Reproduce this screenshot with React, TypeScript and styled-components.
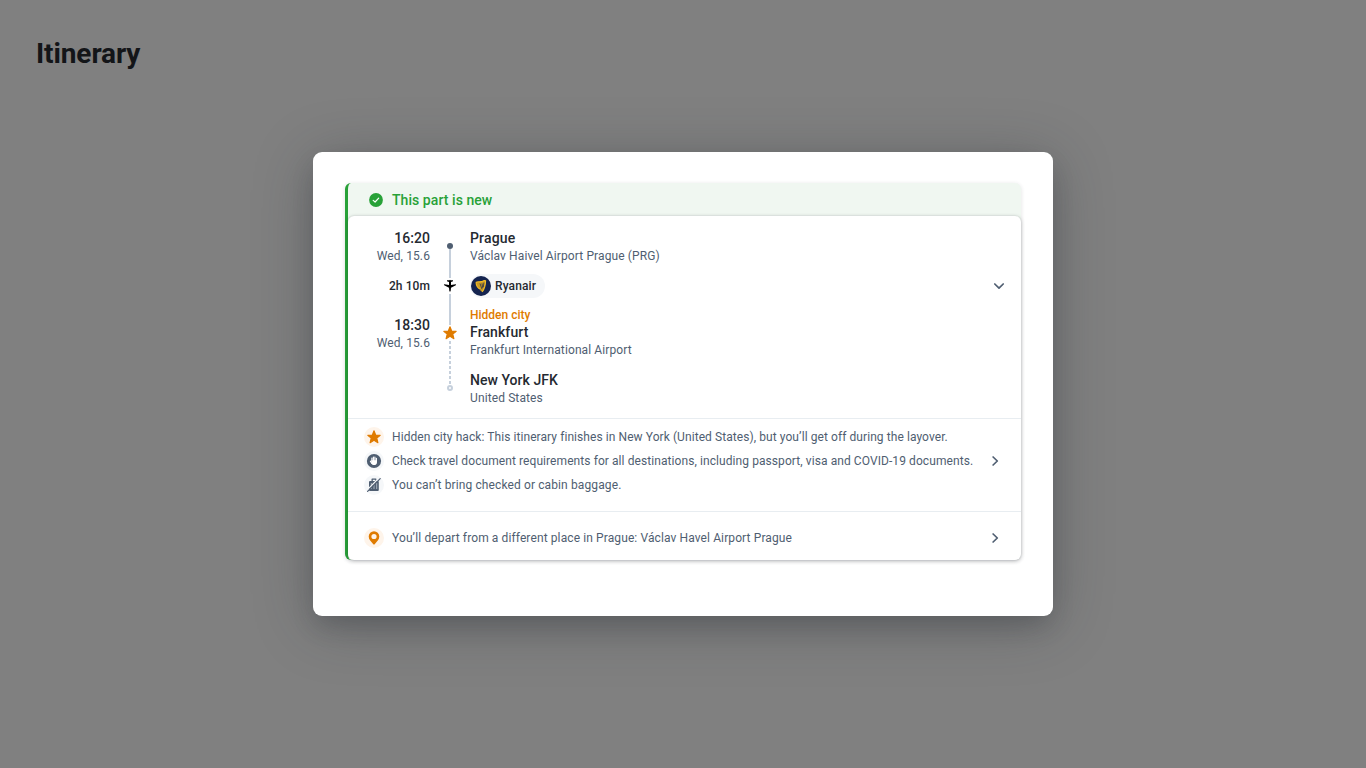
import React from "react";
import styled, { createGlobalStyle } from "styled-components";

const ink = "#252a31";
const cloud = "#4f5e71";
const orange = "#df7b00";
const green = "#28a138";
const line = "#c6d0dc";

const GlobalStyle = createGlobalStyle`
  * { box-sizing: border-box; }
  body { margin: 0; background: #808080; font-family: Roboto, "Liberation Sans", sans-serif; color: ${ink}; }
`;

const Page = styled.div`
  height: 768px;
  overflow: hidden;
  padding: 36px 36px 0;
`;
const Title = styled.h1`
  margin: 0;
  font-size: 28px;
  line-height: 36px;
  height: 36px;
  font-weight: 700;
  letter-spacing: -0.1px;
  color: #131518;
`;
const Modal = styled.section`
  width: 740px;
  height: 464px;
  margin: 80px auto 0;
  padding: 31px 32px;
  background: #fff;
  border-radius: 9px;
  box-shadow: 0 12px 24px -4px rgba(37, 42, 49, 0.24), 0 8px 60px 0 rgba(37, 42, 49, 0.32);
`;
const Part = styled.article`
  width: 676px;
  height: 377px;
  border-left: 3px solid ${green};
  border-radius: 6px;
  background: #f0f7f1;
  box-shadow: 0 1px 4px 0 rgba(37, 42, 49, 0.14);
`;
const PartHeader = styled.header`
  display: flex;
  align-items: center;
  height: 33px;
  padding: 1px 0 0 20px;
  gap: 8px;
  color: ${green};
  font-size: 14px;
  font-weight: 500;
  letter-spacing: 0.06px;
`;
const Body = styled.div`
  height: 344px;
  background: #fff;
  border-radius: 6px;
  box-shadow: 0 0 2px 0 rgba(37, 42, 49, 0.16), 0 1px 4px 0 rgba(37, 42, 49, 0.24);
`;
const Route = styled.div`
  display: grid;
  grid-template-columns: 82px 40px 1fr 45px;
  height: 202px;
  padding-top: 12px;
`;
const Times = styled.div`
  text-align: right;
`;
const Stops = styled.div``;
const Stop = styled.div<{ $gap?: number }>`
  margin-top: ${(p) => p.$gap ?? 0}px;
`;
const Primary = styled.div<{ $track?: number }>`
  font-size: 14px;
  line-height: 20px;
  font-weight: 500;
  letter-spacing: ${(p) => p.$track ?? 0}px;
`;
const Secondary = styled.div`
  font-size: 12px;
  line-height: 16px;
  letter-spacing: 0.11px;
  color: ${cloud};
`;
const Duration = styled.div`
  margin-top: 14px;
  font-size: 12px;
  line-height: 16px;
  font-weight: 500;
  letter-spacing: 0.08px;
`;
const Hidden = styled.div`
  height: 15px;
  font-size: 12px;
  line-height: 16px;
  font-weight: 500;
  color: ${orange};
`;
const Rail = styled.div`
  display: flex;
  flex-direction: column;
  align-items: center;
  padding-top: 15px;
  svg { display: block; flex: none; }
`;
const Dot = styled.span`
  width: 6px;
  height: 6px;
  border-radius: 50%;
  background: ${cloud};
`;
const Track = styled.span<{ $h: number }>`
  width: 2px;
  height: ${(p) => p.$h}px;
  background: ${line};
`;
const Dashes = styled.span`
  width: 2px;
  height: 44px;
  background: repeating-linear-gradient(to bottom, ${line} 0 3px, transparent 3px 5px);
`;
const Ring = styled.span`
  width: 6px;
  height: 6px;
  border: 2px solid ${line};
  border-radius: 50%;
`;
const Carrier = styled.div`
  display: inline-flex;
  align-items: center;
  gap: 4px;
  height: 24px;
  margin-top: 10px;
  padding: 0 9px 0 1px;
  border-radius: 12px;
  background: #f5f7f9;
  font-size: 12px;
  font-weight: 500;
  letter-spacing: 0.12px;
  vertical-align: top;
`;
const Toggle = styled.div`
  padding: 50px 0 0 15px;
`;
const Notes = styled.div<{ $h: number; $top: number }>`
  height: ${(p) => p.$h}px;
  padding: ${(p) => p.$top}px 18px 0 16px;
  border-top: 1px solid #e8edf1;
`;
const Note = styled.div`
  display: flex;
  align-items: center;
  height: 24px;
  font-size: 12px;
  color: ${cloud};
  svg { flex: none; }
`;
const Badge = styled.span<{ $warm?: boolean }>`
  display: flex;
  align-items: center;
  justify-content: center;
  width: 20px;
  height: 20px;
  margin-right: 8px;
  border-radius: 50%;
  background: ${(p) => (p.$warm ? "#fef4ea" : "#f5f7f9")};
`;
const NoteText = styled.span<{ $track: number }>`
  flex: 1;
  white-space: nowrap;
  letter-spacing: ${(p) => p.$track}px;
`;

const Check = () => (
  <svg width="16" height="16" viewBox="0 0 16 16">
    <circle cx="8" cy="8" r="6.9" fill={green} />
    <path d="M5.2 8.4 7.1 10 10.7 6.2" fill="none" stroke="#fff" strokeWidth="1.2" strokeLinecap="round" strokeLinejoin="round" />
  </svg>
);
const Star = () => (
  <svg width="16" height="16" viewBox="0 0 16 16">
    <path d="M8 1.8 9.7 6 14.2 6.3 10.8 9.2 11.9 13.7 8 11.3 4.1 13.7 5.2 9.2 1.8 6.3 6.3 6Z" fill={orange} stroke={orange} strokeWidth="1.1" strokeLinejoin="round" />
  </svg>
);
const Plane = () => (
  <svg width="16" height="16" viewBox="0 0 16 16">
    <path d="M5 2.2h2.5L8 1.800l.5.4H11v1L9 4.100V7.100L13.600 6.200Q14.500 6.300 13.800 7.300L9 9.800 8.700 12.800Q8 14.500 7.300 12.800L7 9.800 2.200 7.300Q1.500 6.300 2.400 6.200L7 7.100V4.100L5 3.200Z" fill="#000" />
  </svg>
);
const Hand = () => (
  <svg width="16" height="16" viewBox="0 0 16 16">
    <circle cx="8" cy="8" r="7.1" fill={cloud} />
    <path d="M5.300 7.300h5.700v1.900c0 1.800-1.100 2.900-2.900 2.900-1.400 0-2.200-.6-2.800-1.900Z" fill="#fff" />
    <path d="M5.900 8V5.100M7.400 8V4.100M8.900 8V4.100M10.400 8V5.300M5.700 10.300 4.400 8.200" fill="none" stroke="#fff" strokeWidth="1.15" strokeLinecap="round" />
  </svg>
);
const NoBag = () => (
  <svg width="16" height="16" viewBox="0 0 16 16">
    <path d="M5.500 4V2.100q0-.7.7-.7h3.600q.7 0 .7.7V4h1.300q1 0 1 1v8q0 1-1 1H4q-1 0-1-1V5q0-1 1-1Zm1.300 0h2.400V2.700H6.800Z" fill={cloud} />
    <path d="M5.300 6v6M8 6v6M10.700 6v6" stroke="#c1c9d2" strokeWidth=".8" />
    <path d="M1 13.100 13.300.8" stroke="#f5f7f9" strokeWidth="1.300" />
    <path d="M1.600 14.300 14.200 1.700" stroke={cloud} strokeWidth="1.200" strokeLinecap="round" />
  </svg>
);
const Pin = () => (
  <svg width="16" height="16" viewBox="0 0 16 16">
    <path fillRule="evenodd" d="M8 1.2a5.300 5.300 0 0 1 5.300 5.300C13.300 9.600 10.900 11.500 8.700 14.200Q8 14.900 7.300 14.200C5.100 11.500 2.700 9.600 2.700 6.500A5.300 5.300 0 0 1 8 1.200Zm0 2.700a2.600 2.600 0 1 0 0 5.200 2.600 2.600 0 0 0 0-5.200Z" fill={orange} />
  </svg>
);
const Chevron = ({ down }: { down?: boolean }) => (
  <svg width="16" height="16" viewBox="0 0 16 16" display="block">
    <path d={down ? "M3.8 6 8 10.2 12.2 6" : "M6.100 4 10.300 8 6.100 12"} fill="none" stroke={cloud} strokeWidth="1.7" strokeLinecap="round" strokeLinejoin="round" />
  </svg>
);
const Harp = () => (
  <svg width="20" height="20" viewBox="0 0 20 20">
    <circle cx="10" cy="10" r="10" fill="#15244f" />
    <path d="M5 6.200C7.300 5.300 9.500 6.400 11.500 5.300 12.700 4.600 13.500 4.300 14.600 4.800 14.500 9.300 13.600 13 11.200 15.800 9.700 15.100 9 14.400 9.300 13.300 6.700 12 5.200 9.500 5 6.200Z" fill="#c99a25" />
    <path d="M5 6.200C7.300 5.300 9.500 6.400 11.500 5.300 12.700 4.600 13.500 4.300 14.600 4.800 14.500 9.300 13.600 13 11.200 15.800M5 6.200C5.200 9.500 6.700 12 9.300 13.300" fill="none" stroke="#f4bd25" strokeWidth="1.100" />
    <path d="M9 7.500 11 13.200M11 7.400 11.800 12M12.900 6.600 12.300 11" fill="none" stroke="#15244f" strokeWidth=".7" />
  </svg>
);

export default function App() {
  return (
    <>
      <GlobalStyle />
      <Page>
        <Title>Itinerary</Title>
        <Modal>
          <Part>
            <PartHeader><Check />This part is new</PartHeader>
            <Body>
              <Route>
                <Times>
                  <Stop><Primary $track={0.06}>16:20</Primary><Secondary>Wed, 15.6</Secondary></Stop>
                  <Duration>2h 10m</Duration>
                  <Stop $gap={21}><Primary $track={0.06}>18:30</Primary><Secondary>Wed, 15.6</Secondary></Stop>
                </Times>
                <Rail>
                  <Dot /><Track $h={29} /><Plane /><Track $h={31} /><Star /><Dashes /><Ring />
                </Rail>
                <Stops>
                  <Stop><Primary $track={0.18}>Prague</Primary><Secondary>Václav Haivel Airport Prague (PRG)</Secondary></Stop>
                  <Carrier><Harp />Ryanair</Carrier>
                  <Stop $gap={9}>
                    <Hidden>Hidden city</Hidden>
                    <Primary $track={0.1}>Frankfurt</Primary>
                    <Secondary>Frankfurt International Airport</Secondary>
                  </Stop>
                  <Stop $gap={12}><Primary $track={0.04}>New York JFK</Primary><Secondary>United States</Secondary></Stop>
                </Stops>
                <Toggle><Chevron down /></Toggle>
              </Route>
              <Notes $h={93} $top={6}>
                <Note><Badge $warm><Star /></Badge><NoteText $track={0.074}>Hidden city hack: This itinerary finishes in New York (United States), but you’ll get off during the layover.</NoteText></Note>
                <Note><Badge><Hand /></Badge><NoteText $track={0.08}>Check travel document requirements for all destinations, including passport, visa and COVID-19 documents.</NoteText><Chevron /></Note>
                <Note><Badge><NoBag /></Badge><NoteText $track={0.115}>You can’t bring checked or cabin baggage.</NoteText></Note>
              </Notes>
              <Notes $h={49} $top={14}>
                <Note><Badge $warm><Pin /></Badge><NoteText $track={0.108}>You’ll depart from a different place in Prague: Václav Havel Airport Prague</NoteText><Chevron /></Note>
              </Notes>
            </Body>
          </Part>
        </Modal>
      </Page>
    </>
  );
}
